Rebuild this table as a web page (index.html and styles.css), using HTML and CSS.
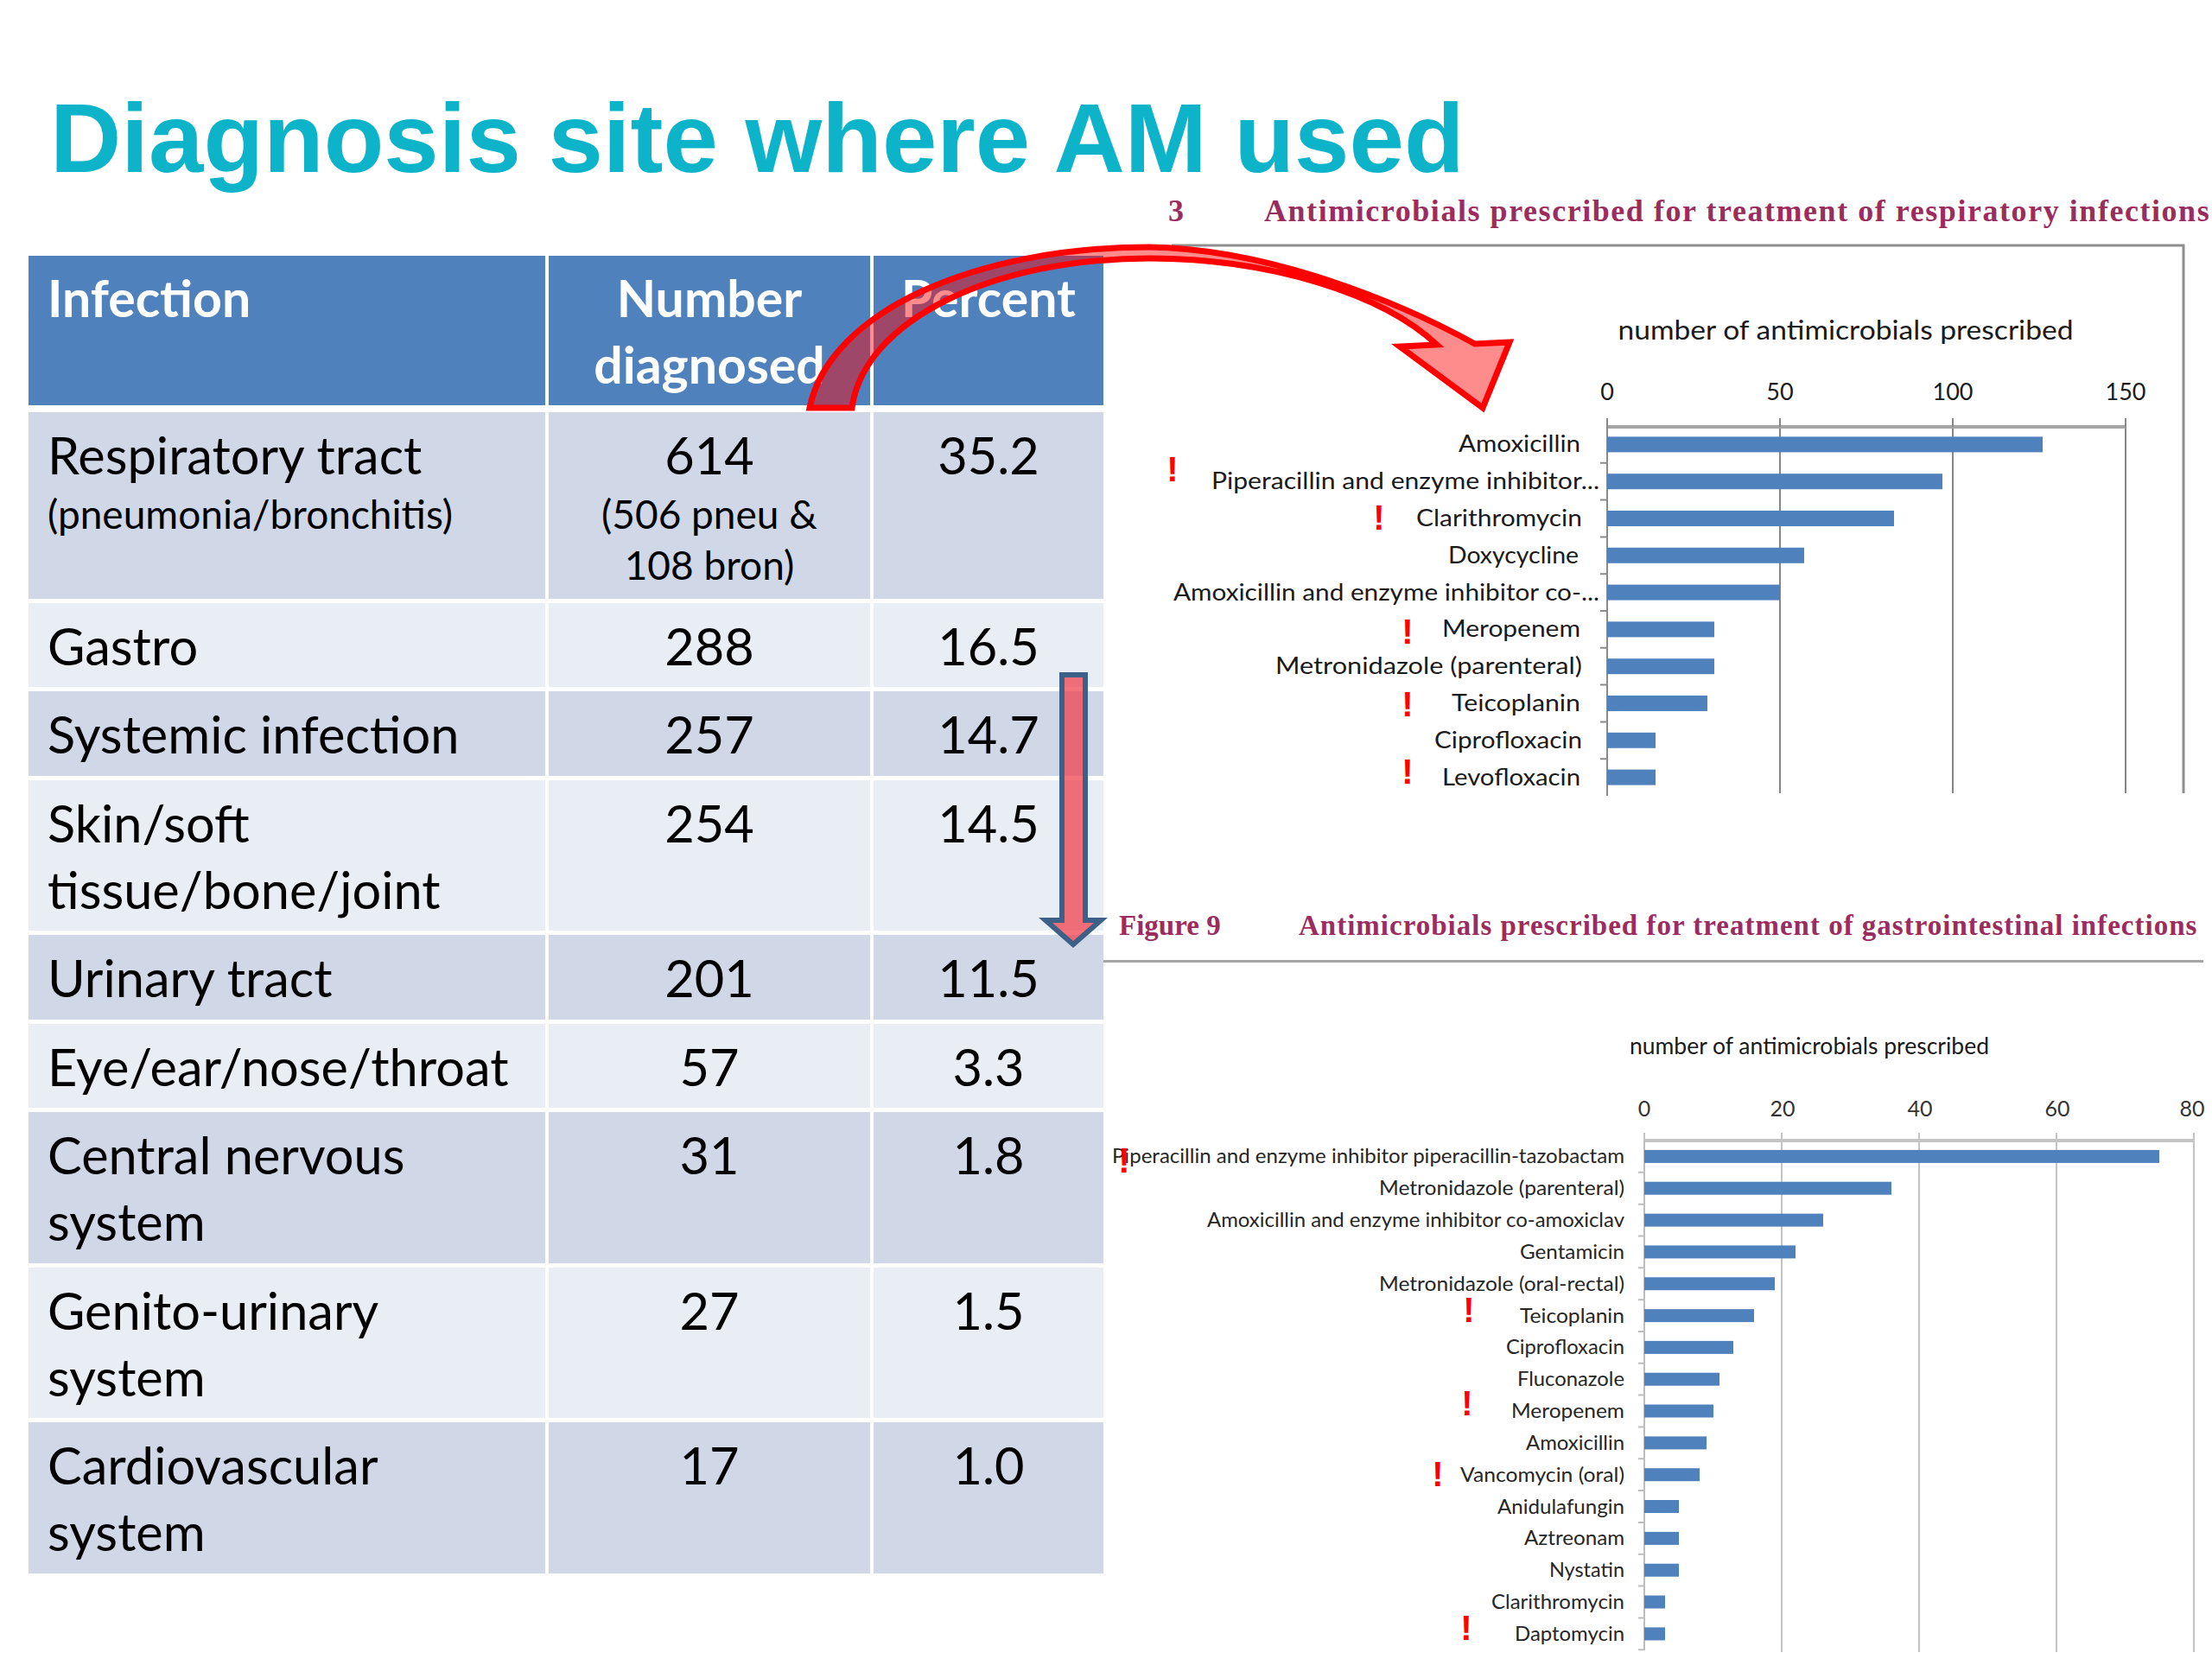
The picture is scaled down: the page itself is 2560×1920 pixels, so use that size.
FILE: index.html
```html
<!DOCTYPE html>
<html lang="en">
<head>
<meta charset="utf-8">
<title>Diagnosis site where AM used</title>
<link rel="stylesheet" href="styles.css">
</head>
<body>
<div class="slide">
  <h1 class="title">Diagnosis site where AM used</h1>
  <div class="content">
    <table class="data">
      <colgroup><col class="col-inf"><col class="col-num"><col class="col-pct"></colgroup>
      <thead>
        <tr><th class="c-left">Infection</th><th>Number<br>diagnosed</th><th>Percent</th></tr>
      </thead>
      <tbody>
        <tr class="row-dark"><td class="c-left">Respiratory tract<span class="sub">(pneumonia/bronchitis)</span></td><td>614<span class="sub">(506 pneu &amp;</span><span class="sub">108 bron)</span></td><td>35.2</td></tr>
        <tr class="row-light"><td class="c-left">Gastro</td><td>288</td><td>16.5</td></tr>
        <tr class="row-dark"><td class="c-left">Systemic infection</td><td>257</td><td>14.7</td></tr>
        <tr class="row-light"><td class="c-left">Skin/soft<br>tissue/bone/joint</td><td>254</td><td>14.5</td></tr>
        <tr class="row-dark"><td class="c-left">Urinary tract</td><td>201</td><td>11.5</td></tr>
        <tr class="row-light"><td class="c-left">Eye/ear/nose/throat</td><td>57</td><td>3.3</td></tr>
        <tr class="row-dark"><td class="c-left">Central nervous<br>system</td><td>31</td><td>1.8</td></tr>
        <tr class="row-light"><td class="c-left">Genito-urinary<br>system</td><td>27</td><td>1.5</td></tr>
        <tr class="row-dark"><td class="c-left">Cardiovascular<br>system</td><td>17</td><td>1.0</td></tr>
      </tbody>
    </table>

    <div class="figures">
      <figure class="fig">
        <figcaption class="cap cap-resp"><span class="cap-num">3</span><span class="cap-text">Antimicrobials prescribed for treatment of respiratory infections</span></figcaption>
        <svg class="chart chart-resp" viewBox="1280 270 1280 680" width="1280" height="680">
          <path class="frame" d="M1356 284 H2527 V918"/>
          <text class="ch-title" x="2136" y="393" textLength="527" lengthAdjust="spacingAndGlyphs">number of antimicrobials prescribed</text>
          <text class="tick" x="1860" y="463">0</text>
          <text class="tick" x="2060" y="463">50</text>
          <text class="tick" x="2260" y="463">100</text>
          <text class="tick" x="2460" y="463">150</text>
          <path class="grid1" d="M2060 493V918 M2260 493V918 M2460 493V918"/>
          <path class="axis1" d="M1860 494H2460"/>
          <path class="grid1" d="M1860 484V494 M2060 484V494 M2260 484V494 M2460 484V494"/>
          <path class="catax1" d="M1860 493V921 M1852 535.8H1860 M1852 578.6H1860 M1852 621.4H1860 M1852 664.2H1860 M1852 707H1860 M1852 749.8H1860 M1852 792.6H1860 M1852 835.4H1860 M1852 878.2H1860"/>
          <g class="bars">
            <rect x="1860" y="505.4" width="504" height="18"/>
            <rect x="1860" y="548.2" width="388" height="18"/>
            <rect x="1860" y="591" width="332" height="18"/>
            <rect x="1860" y="633.8" width="228" height="18"/>
            <rect x="1860" y="676.6" width="200" height="18"/>
            <rect x="1860" y="719.4" width="124" height="18"/>
            <rect x="1860" y="762.2" width="124" height="18"/>
            <rect x="1860" y="805" width="116" height="18"/>
            <rect x="1860" y="847.8" width="56" height="18"/>
            <rect x="1860" y="890.6" width="56" height="18"/>
          </g>
          <g class="lbl1">
            <text x="1829" y="523" textLength="141" lengthAdjust="spacingAndGlyphs">Amoxicillin</text>
            <text x="1851" y="566" textLength="449" lengthAdjust="spacingAndGlyphs">Piperacillin and enzyme inhibitor...</text>
            <text x="1831" y="609" textLength="192" lengthAdjust="spacingAndGlyphs">Clarithromycin</text>
            <text x="1827" y="652" textLength="151" lengthAdjust="spacingAndGlyphs">Doxycycline</text>
            <text x="1851" y="695" textLength="493" lengthAdjust="spacingAndGlyphs">Amoxicillin and enzyme inhibitor co-...</text>
            <text x="1829" y="737" textLength="160" lengthAdjust="spacingAndGlyphs">Meropenem</text>
            <text x="1831" y="780" textLength="355" lengthAdjust="spacingAndGlyphs">Metronidazole (parenteral)</text>
            <text x="1829" y="823" textLength="149" lengthAdjust="spacingAndGlyphs">Teicoplanin</text>
            <text x="1831" y="866" textLength="171" lengthAdjust="spacingAndGlyphs">Ciprofloxacin</text>
            <text x="1829" y="909" textLength="160" lengthAdjust="spacingAndGlyphs">Levofloxacin</text>
          </g>
          <g class="bang">
            <text x="1357" y="557">!</text>
            <text x="1596" y="613">!</text>
            <text x="1629" y="745">!</text>
            <text x="1629" y="829">!</text>
            <text x="1629" y="907">!</text>
          </g>
        </svg>
      </figure>

      <figure class="fig">
        <figcaption class="cap cap-gi"><span class="cap-num">Figure 9</span><span class="cap-text">Antimicrobials prescribed for treatment of gastrointestinal infections</span></figcaption>
        <svg class="chart chart-gi" viewBox="1280 1114 1280 806" width="1280" height="806">
          <text class="ch-title2" x="2094" y="1220" textLength="416" lengthAdjust="spacingAndGlyphs">number of antimicrobials prescribed</text>
          <text class="tick2" x="1903" y="1292">0</text>
          <text class="tick2" x="2063" y="1292">20</text>
          <text class="tick2" x="2222" y="1292">40</text>
          <text class="tick2" x="2381" y="1292">60</text>
          <text class="tick2" x="2537" y="1292">80</text>
          <path class="grid2" d="M2062 1320V1912 M2221 1320V1912 M2380 1320V1912 M2539 1320V1912"/>
          <path class="axis2" d="M1903 1320H2539"/>
          <path class="grid2" d="M1903 1311V1320 M2062 1311V1320 M2221 1311V1320 M2380 1311V1320 M2539 1311V1320"/>
          <path class="catax2" d="M1903 1320V1910 M1896 1356.8H1903 M1896 1393.7H1903 M1896 1430.5H1903 M1896 1467.3H1903 M1896 1504.2H1903 M1896 1541H1903 M1896 1577.8H1903 M1896 1614.6H1903 M1896 1651.5H1903 M1896 1688.3H1903 M1896 1725.1H1903 M1896 1762H1903 M1896 1798.8H1903 M1896 1835.6H1903 M1896 1872.5H1903 M1896 1909.3H1903"/>
          <g class="bars">
            <rect x="1903" y="1330.9" width="596" height="15"/>
            <rect x="1903" y="1367.7" width="286" height="15"/>
            <rect x="1903" y="1404.6" width="207" height="15"/>
            <rect x="1903" y="1441.4" width="175" height="15"/>
            <rect x="1903" y="1478.2" width="151" height="15"/>
            <rect x="1903" y="1515.1" width="127" height="15"/>
            <rect x="1903" y="1551.9" width="103" height="15"/>
            <rect x="1903" y="1588.7" width="87" height="15"/>
            <rect x="1903" y="1625.5" width="80" height="15"/>
            <rect x="1903" y="1662.4" width="72" height="15"/>
            <rect x="1903" y="1699.2" width="64" height="15"/>
            <rect x="1903" y="1736" width="40" height="15"/>
            <rect x="1903" y="1772.9" width="40" height="15"/>
            <rect x="1903" y="1809.7" width="40" height="15"/>
            <rect x="1903" y="1846.5" width="24" height="15"/>
            <rect x="1903" y="1883.4" width="24" height="15"/>
          </g>
          <g class="lbl2">
            <text x="1880" y="1346.4" textLength="593" lengthAdjust="spacingAndGlyphs">Piperacillin and enzyme inhibitor piperacillin-tazobactam</text>
            <text x="1880" y="1383.2" textLength="284" lengthAdjust="spacingAndGlyphs">Metronidazole (parenteral)</text>
            <text x="1880" y="1420.1" textLength="483" lengthAdjust="spacingAndGlyphs">Amoxicillin and enzyme inhibitor co-amoxiclav</text>
            <text x="1880" y="1456.9" textLength="121" lengthAdjust="spacingAndGlyphs">Gentamicin</text>
            <text x="1880" y="1493.7" textLength="284" lengthAdjust="spacingAndGlyphs">Metronidazole (oral-rectal)</text>
            <text x="1880" y="1530.6" textLength="121" lengthAdjust="spacingAndGlyphs">Teicoplanin</text>
            <text x="1880" y="1567.4" textLength="137" lengthAdjust="spacingAndGlyphs">Ciprofloxacin</text>
            <text x="1880" y="1604.2" textLength="124" lengthAdjust="spacingAndGlyphs">Fluconazole</text>
            <text x="1880" y="1641" textLength="131" lengthAdjust="spacingAndGlyphs">Meropenem</text>
            <text x="1880" y="1677.9" textLength="114" lengthAdjust="spacingAndGlyphs">Amoxicillin</text>
            <text x="1880" y="1714.7" textLength="190" lengthAdjust="spacingAndGlyphs">Vancomycin (oral)</text>
            <text x="1880" y="1751.5" textLength="147" lengthAdjust="spacingAndGlyphs">Anidulafungin</text>
            <text x="1880" y="1788.4" textLength="116" lengthAdjust="spacingAndGlyphs">Aztreonam</text>
            <text x="1880" y="1825.2" textLength="87" lengthAdjust="spacingAndGlyphs">Nystatin</text>
            <text x="1880" y="1862" textLength="154" lengthAdjust="spacingAndGlyphs">Clarithromycin</text>
            <text x="1880" y="1898.9" textLength="127" lengthAdjust="spacingAndGlyphs">Daptomycin</text>
          </g>
          <g class="bang">
            <text x="1301" y="1357">!</text>
            <text x="1700" y="1530">!</text>
            <text x="1698" y="1638">!</text>
            <text x="1664" y="1720">!</text>
            <text x="1697" y="1898">!</text>
          </g>
        </svg>
      </figure>
    </div>
  </div>

  <svg class="overlay" viewBox="0 0 2560 1920" width="2560" height="1920" aria-hidden="true">
    <path class="curve-arrow" d="M937 472 C960 360 1130 286 1330 286 C1470 288 1620 350 1707 398 L1747 396 L1716 472 L1620 401 L1663 399 C1600 340 1470 299 1330 299 C1150 299 1000 370 986 472 Z"/>
    <path class="down-arrow" d="M1229 781 H1256 V1065 H1274 L1242 1093 L1210 1065 H1229 Z"/>
  </svg>
</div>
</body>
</html>
```

FILE: styles.css
```css
html, body {
  margin: 0;
  padding: 0;
  background: #ffffff;
}

.slide {
  position: relative;
  width: 2560px;
  height: 1920px;
  overflow: hidden;
  background: #ffffff;
  font-family: Lato, "Open Sans", "Liberation Sans", sans-serif;
}

.title {
  margin: 0;
  padding: 97px 0 0 58px;
  font-family: "Liberation Sans", Arial, sans-serif;
  font-weight: 700;
  font-size: 114px;
  line-height: 126px;
  color: #0db4c9;
  white-space: nowrap;
}

.content {
  display: grid;
  grid-template-columns: 1280px 1280px;
  align-items: start;
}

/* ---------- table ---------- */
.data {
  margin: 68px 0 0 29px;
  width: 1252px;
  table-layout: fixed;
  border-collapse: separate;
  border-spacing: 4px 5px;
}

.col-inf { width: 598px; }
.col-num { width: 372px; }
.col-pct { width: 266px; }

.data th {
  background: #4f81bd;
  color: #ffffff;
  font-weight: 700;
  font-size: 59px;
  line-height: 77px;
  padding: 10px 0 9px;
  border-bottom: 3px solid #ffffff;
  text-align: center;
  vertical-align: top;
}

.data td {
  font-size: 59.5px;
  line-height: 77px;
  padding: 11px 0 9.5px;
  text-align: center;
  vertical-align: top;
  color: #000000;
}

.data .c-left {
  text-align: left;
  padding-left: 22px;
}

.row-dark td { background: #d0d8e8; }
.row-light td { background: #e9edf4; }

.sub {
  display: block;
  font-size: 46px;
  line-height: 59px;
}

/* ---------- figures ---------- */
.figures {
  display: flex;
  flex-direction: column;
}

.fig {
  margin: 0;
  display: flex;
  flex-direction: column;
}

.cap {
  display: flex;
  white-space: nowrap;
  font-family: "Liberation Serif", "Times New Roman", serif;
  font-weight: 700;
  color: #9b2c5e;
}

.cap-resp {
  font-size: 36px;
  line-height: 42px;
  letter-spacing: 1.55px;
  padding-left: 72px;
  margin-bottom: 5px;
}

.cap-resp .cap-num { width: 111px; flex: none; }

.cap-gi {
  font-size: 33px;
  line-height: 47px;
  letter-spacing: 1px;
  padding: 0 0 16px 18px;
  margin: 98px 10px 0 -3px;
  border-bottom: 3px solid #a6a6a6;
}

.cap-gi .cap-num { width: 208px; flex: none; letter-spacing: 0; }

.chart {
  display: block;
  flex: none;
}

.frame {
  fill: none;
  stroke: #8f8f8f;
  stroke-width: 3;
}

.ch-title {
  font-family: Lato, "Liberation Sans", sans-serif;
  font-size: 30px;
  fill: #1a1a1a;
  text-anchor: middle;
}

.ch-title2 {
  font-family: Lato, "Liberation Sans", sans-serif;
  font-size: 26px;
  fill: #1a1a1a;
  text-anchor: middle;
}

.tick {
  font-family: Lato, "Liberation Sans", sans-serif;
  font-size: 27px;
  fill: #1a1a1a;
  text-anchor: middle;
}

.tick2 {
  font-family: Lato, "Liberation Sans", sans-serif;
  font-size: 25px;
  fill: #333333;
  text-anchor: middle;
}

.grid1 {
  fill: none;
  stroke: #878787;
  stroke-width: 2;
}

.axis1 {
  fill: none;
  stroke: #a5a5a5;
  stroke-width: 4;
}

.catax1 {
  fill: none;
  stroke: #8a8a8a;
  stroke-width: 2;
}

.grid2 {
  fill: none;
  stroke: #c4c4c4;
  stroke-width: 2;
}

.axis2 {
  fill: none;
  stroke: #c4c4c4;
  stroke-width: 4;
}

.catax2 {
  fill: none;
  stroke: #bdbdbd;
  stroke-width: 2;
}

.bars rect {
  fill: #4f81bd;
}

.lbl1 text {
  font-family: Lato, "Liberation Sans", sans-serif;
  font-size: 26px;
  fill: #1a1a1a;
  text-anchor: end;
}

.lbl2 text {
  font-family: Lato, "Liberation Sans", sans-serif;
  font-size: 23px;
  fill: #262626;
  text-anchor: end;
}

.bang text {
  font-family: "Liberation Sans", Arial, sans-serif;
  font-weight: 700;
  font-size: 40px;
  fill: #ff0000;
  text-anchor: middle;
}

/* ---------- overlay arrows ---------- */
.overlay {
  position: absolute;
  left: 0;
  top: 0;
  pointer-events: none;
}

.curve-arrow {
  fill: rgba(255, 0, 0, 0.45);
  stroke: #ff0000;
  stroke-width: 7;
  stroke-linejoin: miter;
}

.down-arrow {
  fill: rgba(240, 60, 70, 0.72);
  stroke: #3c6088;
  stroke-width: 6;
  stroke-linejoin: miter;
}
```
